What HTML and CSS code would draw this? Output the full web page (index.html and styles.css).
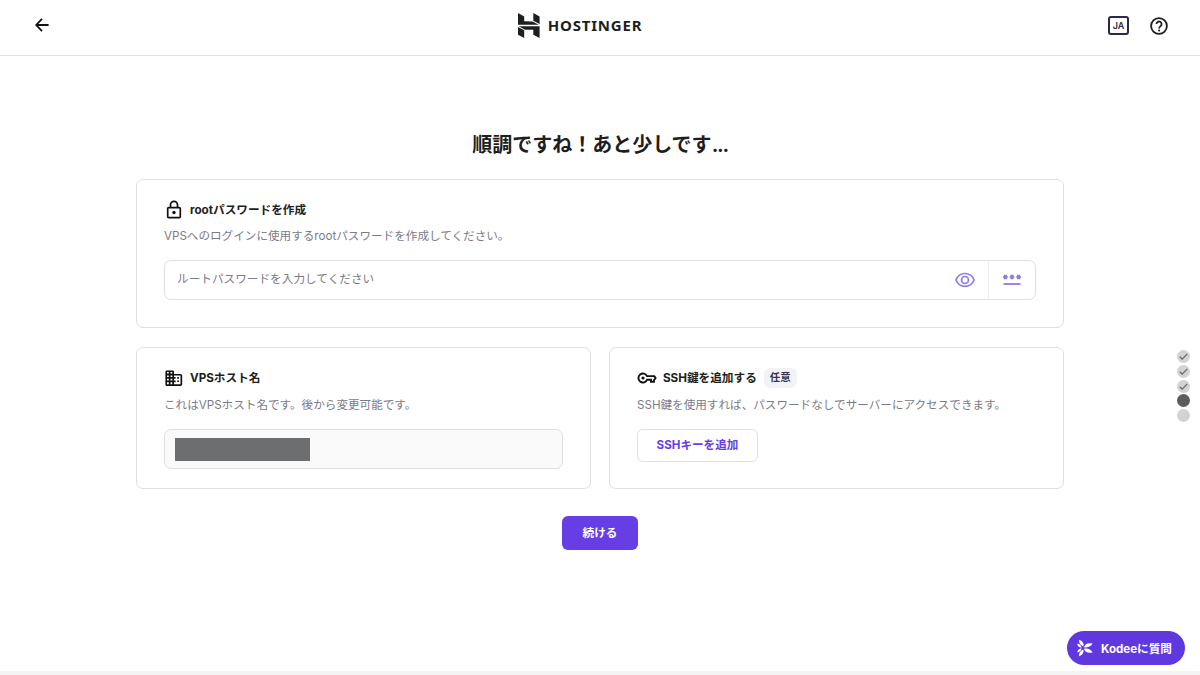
FILE: index.html
```
<!DOCTYPE html>
<html lang="ja">
<head>
    <meta charset="UTF-8">
    <meta name="viewport" content="width=device-width, initial-scale=1.0">
    <title>Hostinger</title>
    <link rel="stylesheet" href="styles.css">
</head>
<body>

    <!-- Header -->
    <header class="header">
        <a class="back" href="#" aria-label="戻る">
            <svg width="14" height="14" viewBox="0 0 14 14" fill="none" stroke="#111" stroke-width="1.8">
                <path d="M7 .8L1.2 7L7 13.2M1.2 7H13.6"/>
            </svg>
        </a>
        <div class="logo">
            <svg width="22" height="25" viewBox="0 0 22 25" fill="#1d1e20">
                <path d="M0 0L6.2 3.4V8.3L14.5 8.4L20.8 11.7H0Z"/>
                <path d="M15.3 0L21.6 3.4V11L15.3 7.7Z"/>
                <path d="M.8 13.3H21.6V25L15.3 21.7V16.8L7 16.7Z"/>
                <path d="M0 14L6.2 17.3V25L0 21.7Z"/>
            </svg>
            <span>HOSTINGER</span>
        </div>
        <div class="header-tools">
            <span class="lang">JA</span>
            <svg width="18" height="18" viewBox="0 0 18 18" fill="none" stroke="#1d1e20" stroke-width="1.8">
                <circle cx="9" cy="9" r="7.9"/>
                <path d="M6.5 7.1A2.55 2.55 0 1 1 10.7 9C9.6 9.8 9.1 10.1 9.1 11.4"/>
                <circle cx="9.1" cy="13.5" r="1.1" fill="#1d1e20" stroke="none"/>
            </svg>
        </div>
    </header>

    <main class="content">
        <h1>順調ですね！あと少しです<span class="dots">...</span></h1>

        <!-- Root password -->
        <section class="card card-password">
            <div class="card-title">
                <svg width="20" height="20" viewBox="0 0 20 20" fill="none" stroke="#111" stroke-width="1.7">
                    <rect x="3.7" y="7.6" width="12.6" height="10" rx="1"/>
                    <path d="M6.5 7.5V4.8A3.5 3.5 0 0 1 13.5 4.8V7.5"/>
                    <circle cx="10" cy="12.5" r="1.7" fill="#111" stroke="none"/>
                </svg>
                <h2>rootパスワードを作成</h2>
            </div>
            <p>VPSへのログインに使用するrootパスワードを作成してください。</p>
            <div class="field">
                <input type="password" placeholder="ルートパスワードを入力してください">
                <button type="button" class="field-icon" aria-label="表示">
                    <svg width="20" height="16" viewBox="0 0 20 16" fill="none" stroke="#8c7ae6" stroke-width="1.7">
                        <path d="M.9 8C2.6 4.1 6 1.5 10 1.5S17.4 4.1 19.1 8C17.4 11.9 14 14.4 10 14.4S2.6 11.9 .9 8Z"/>
                        <circle cx="10" cy="8" r="3.5"/>
                    </svg>
                </button>
                <button type="button" class="field-icon generate" aria-label="生成">
                    <svg width="18" height="12" viewBox="0 0 18 12" fill="none" stroke="#8c7ae6" stroke-width="1.6">
                        <path d="M0 3H4.8M1.2 .9L3.6 5.1M3.6 .9L1.2 5.1M6.6 3H11.4M7.8 .9L10.2 5.1M10.2 .9L7.8 5.1M13.2 3H18M14.4 .9L16.8 5.1M16.8 .9L14.4 5.1"/>
                        <path d="M.5 10H17.5" stroke-width="1.8"/>
                    </svg>
                </button>
            </div>
        </section>

        <div class="row">
            <!-- Hostname -->
            <section class="card">
                <div class="card-title">
                    <svg width="20" height="20" viewBox="0 0 20 20">
                        <path fill="#111" fill-rule="evenodd" d="M2.6 2.5H8.9Q10 2.5 10 3.6V6H16.4Q18.2 6 18.2 7.6V16.3Q18.2 17.9 16.4 17.9H2.6Q1.4 17.9 1.4 16.6V3.8Q1.4 2.5 2.6 2.5ZM3 4.1V5.6H4.8V4.1ZM6.5 4.1V5.6H8.3V4.1ZM3 7.4V9H4.8V7.4ZM6.5 7.4V9H8.3V7.4ZM3 10.8V12.4H4.8V10.8ZM6.5 10.8V12.4H8.3V10.8ZM3 14.2V16.2H4.8V14.2ZM6.5 14.2V16.2H8.3V14.2ZM10 7.6V9H11.6V10.8H10V12.4H11.6V14.2H10V16.2H16.5V7.6Z"/>
                        <path fill="#111" d="M13.2 9H14.9V10.7H13.2ZM13.2 12.4H14.9V14.1H13.2Z"/>
                    </svg>
                    <h2>VPSホスト名</h2>
                </div>
                <p>これはVPSホスト名です。後から変更可能です。</p>
                <div class="field hostname">
                    <span class="redacted"></span>
                </div>
            </section>

            <!-- SSH key -->
            <section class="card">
                <div class="card-title">
                    <svg width="20" height="20" viewBox="0 0 20 20" fill="none" stroke="#111" stroke-width="1.9">
                        <path d="M10 8.1H17.3L18.6 10L17 12.1V13.8H14V11.8H10A4.5 4.5 0 1 1 10 8.1Z"/>
                        <circle cx="6" cy="10" r="1.6" fill="#111" stroke="none"/>
                    </svg>
                    <h2>SSH鍵を追加する</h2>
                    <span class="badge">任意</span>
                </div>
                <p>SSH鍵を使用すれば、パスワードなしでサーバーにアクセスできます。</p>
                <button type="button" class="btn-outline">SSHキーを追加</button>
            </section>
        </div>

        <button type="button" class="btn-primary">続ける</button>
    </main>

    <!-- Step progress -->
    <div class="steps">
        <span class="step"><svg viewBox="0 0 13 13"><path d="M2.8 6.8L5.2 9.1L10.3 3.8"/></svg></span>
        <span class="step"><svg viewBox="0 0 13 13"><path d="M2.8 6.8L5.2 9.1L10.3 3.8"/></svg></span>
        <span class="step"><svg viewBox="0 0 13 13"><path d="M2.8 6.8L5.2 9.1L10.3 3.8"/></svg></span>
        <span class="step current"></span>
        <span class="step"></span>
    </div>

    <button type="button" class="kodee">
        <svg width="16" height="18" viewBox="0 0 16 18" fill="#fff">
            <path d="M2 .8C5.4 1.8 7 4.2 6.4 7.4C3.4 6.4 1.8 4 2 .8Z"/>
            <path d="M2 17.2C5.4 16.2 7 13.8 6.4 10.6C3.4 11.6 1.8 14 2 17.2Z"/>
            <path d="M7 8.2C8 4.8 11 3.4 15.6 4.6C13.9 7.6 10.8 8.9 7 8.2Z"/>
            <path d="M7 9.8C8 13.2 11 14.6 15.6 13.4C13.9 10.4 10.8 9.1 7 9.8Z"/>
            <path d="M.3 4.4C2.8 5 4.2 6.4 4.6 8.7C2 8.3 .4 6.8 .3 4.4Z"/>
            <path d="M.3 13.6C2.8 13 4.2 11.6 4.6 9.3C2 9.7 .4 11.2 .3 13.6Z"/>
        </svg>
        <span>Kodeeに質問</span>
    </button>
    <div class="bottom-bar"></div>

</body>
</html>
```

FILE: styles.css
```
* {
    box-sizing: border-box;
}

body {
    margin: 0;
    height: 100vh;
    overflow: hidden;
    background: #fff;
    color: #1d1e20;
    font-family: Inter, "Noto Sans CJK JP", sans-serif;
    font-size: 11.6px;
}

button, input {
    font-family: inherit;
}

svg {
    display: block;
    flex: none;
}

/* Header */
.header {
    display: grid;
    grid-template-columns: 1fr auto 1fr;
    align-items: center;
    height: 56px;
    padding: 0 32px 4px 35px;
    border-bottom: 1px solid #e2e2e4;
}

.back {
    margin-top: -2px;
}

.logo {
    display: flex;
    align-items: center;
    gap: 8px;
    margin-right: 43px;
    font-family: "Noto Sans", sans-serif;
    font-size: 15px;
    font-weight: 700;
    letter-spacing: 0.8px;
    line-height: 20px;
}

.logo span {
    margin-bottom: 2px;
}

.header-tools {
    display: flex;
    align-items: center;
    justify-content: flex-end;
    gap: 21px;
}

.lang {
    width: 21px;
    height: 19px;
    border: 2px solid #2f2747;
    border-radius: 3px;
    color: #2f2747;
    font-size: 9px;
    font-weight: 600;
    line-height: 15px;
    text-align: center;
}

/* Content */
.content {
    width: 928px;
    margin: 0 auto;
    padding-top: 75px;
}

h1 {
    margin: 0 0 19px;
    font-size: 20px;
    font-weight: 700;
    line-height: 29px;
    text-align: center;
}

.dots {
    letter-spacing: -1.3px;
}

h2 {
    margin: 0 0 0 6px;
    font-size: 11.65px;
    font-weight: 700;
    line-height: 18px;
}

.card {
    height: 142px;
    padding: 20px 27px;
    border: 1px solid #dfdfe3;
    border-radius: 7px;
}

.card-password {
    height: 149px;
    margin-bottom: 19px;
}

.card-title {
    display: flex;
    align-items: center;
    height: 20px;
}

.card p {
    margin: 8px 0 15px;
    color: #7c7a88;
    line-height: 17px;
    white-space: nowrap;
}

.row .card p {
    margin-top: 9px;
}

.field {
    display: flex;
    height: 40px;
    border: 1px solid #dfdfe3;
    border-radius: 7px;
}

.field input {
    flex: 1;
    padding: 0 12px 2px;
    border: 0;
    background: none;
    font-size: 11.65px;
    outline: none;
}

.field input::placeholder {
    color: #7c7a88;
}

.field-icon {
    display: flex;
    align-items: center;
    justify-content: center;
    width: 47px;
    padding: 0;
    border: 0;
    background: none;
}

.generate {
    border-left: 1px solid #ececef;
}

.row {
    display: grid;
    grid-template-columns: 1fr 1fr;
    gap: 18px;
    margin-bottom: 27px;
}

.hostname {
    align-items: center;
    padding: 0 10px;
    background: #fafafa;
}

.redacted {
    width: 135px;
    height: 23px;
    background: #6d6e6f;
}

.badge {
    margin-left: 7px;
    padding: 0 6px;
    border-radius: 6px;
    background: #f2f3f6;
    color: #36344d;
    font-size: 10.4px;
    font-weight: 700;
    line-height: 20px;
}

.btn-outline {
    display: block;
    width: 121px;
    height: 33px;
    padding: 0 0 3px;
    border: 1px solid #dfdfe3;
    border-radius: 6px;
    background: #fff;
    color: #673de6;
    font-size: 11.6px;
    font-weight: 700;
}

.btn-primary {
    display: block;
    width: 76px;
    height: 34px;
    margin: 0 auto;
    padding: 0 0 3px;
    border: 0;
    border-radius: 6px;
    background: #673de6;
    color: #fff;
    font-size: 11.6px;
    font-weight: 700;
}

/* Floating items */
.steps {
    position: absolute;
    top: 350px;
    right: 10px;
    display: grid;
    gap: 1.8px;
}

.step {
    width: 13px;
    height: 13px;
    border-radius: 50%;
    background: #d3d3d3;
}

.step svg {
    fill: none;
    stroke: #666;
    stroke-width: 1.2;
}

.step.current {
    background: #5d5d5d;
}

.kodee {
    position: absolute;
    right: 15px;
    bottom: 10px;
    display: flex;
    align-items: center;
    gap: 8px;
    width: 118px;
    height: 34px;
    padding: 0 0 1px 10px;
    border: 0;
    border-radius: 17px;
    background: #5f38de;
    color: #fff;
    font-size: 11.6px;
    font-weight: 700;
    white-space: nowrap;
}

.bottom-bar {
    position: absolute;
    right: 0;
    bottom: 0;
    left: 0;
    height: 4px;
    background: #f4f4f5;
}
```
